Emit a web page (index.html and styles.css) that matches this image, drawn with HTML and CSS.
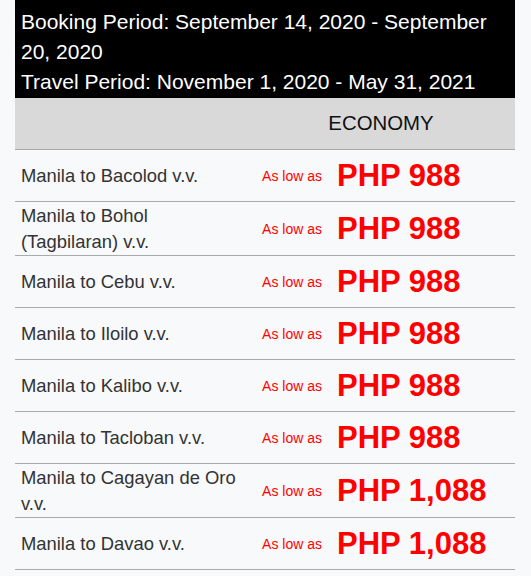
FILE: index.html
```html
<!DOCTYPE html>
<html lang="en">
<head>
<meta charset="utf-8">
<title>Fares</title>
<link rel="stylesheet" href="styles.css">
</head>
<body>
<div class="wrap">
  <div class="period">
    <div>Booking Period: September 14, 2020 - September 20, 2020</div>
    <div>Travel Period: November 1, 2020 - May 31, 2021</div>
  </div>
  <table class="fares">
    <colgroup>
      <col class="c-route">
      <col class="c-label">
      <col class="c-price">
    </colgroup>
    <thead>
      <tr><th></th><th colspan="2" class="class-head">ECONOMY</th></tr>
    </thead>
    <tbody>
      <tr><td class="route">Manila to Bacolod v.v.</td><td class="label">As low as</td><td class="price">PHP 988</td></tr>
      <tr><td class="route">Manila to Bohol (Tagbilaran) v.v.</td><td class="label">As low as</td><td class="price">PHP 988</td></tr>
      <tr><td class="route">Manila to Cebu v.v.</td><td class="label">As low as</td><td class="price">PHP 988</td></tr>
      <tr><td class="route">Manila to Iloilo v.v.</td><td class="label">As low as</td><td class="price">PHP 988</td></tr>
      <tr><td class="route">Manila to Kalibo v.v.</td><td class="label">As low as</td><td class="price">PHP 988</td></tr>
      <tr><td class="route">Manila to Tacloban v.v.</td><td class="label">As low as</td><td class="price">PHP 988</td></tr>
      <tr><td class="route">Manila to Cagayan de Oro v.v.</td><td class="label">As low as</td><td class="price">PHP 1,088</td></tr>
      <tr><td class="route">Manila to Davao v.v.</td><td class="label">As low as</td><td class="price">PHP 1,088</td></tr>
      <tr><td class="route">Manila to Puerto Princesa v.v.</td><td class="label">As low as</td><td class="price">PHP 1,088</td></tr>
    </tbody>
  </table>
</div>
</body>
</html>
```
FILE: styles.css
```css
html, body {
  margin: 0;
  padding: 0;
  background: #f8f9fb;
  font-family: "Liberation Sans", Arial, sans-serif;
}

.wrap {
  width: 500px;
  margin-left: 15px;
}

.period {
  background: #000;
  color: #fff;
  font-size: 21px;
  line-height: 30px;
  padding: 7px 6px 1px 6px;
}

.fares {
  width: 500px;
  border-collapse: collapse;
  table-layout: fixed;
}

.c-route { width: 232px; }
.c-label { width: 83px; }
.c-price { width: 185px; }

.fares th {
  background: #d9d9d9;
  height: 51px;
  padding: 0;
  font-weight: normal;
  font-size: 20.4px;
  color: #111;
  border-bottom: 1px solid #aaa;
}

.fares td {
  padding: 1px 6px;
  vertical-align: middle;
  border-bottom: 1px solid #aaa;
}

.route {
  font-size: 18.4px;
  line-height: 25.5px;
  color: #333;
}

.fares td.label {
  font-size: 14px;
  color: #f00;
  text-align: right;
  padding-right: 8px;
}

.fares td.price {
  font-size: 31px;
  line-height: 49px;
  font-weight: bold;
  color: #f00;
  padding-left: 7px;
}
```
